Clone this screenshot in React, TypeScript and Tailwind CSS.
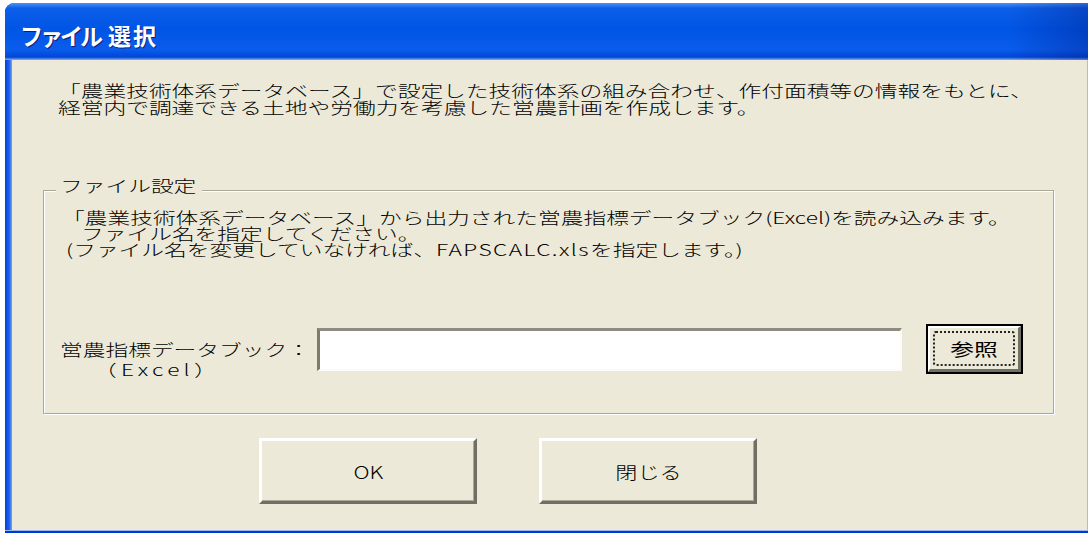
import type { ReactNode } from "react";

// one line of dialog text, stretched sideways like the old UI font
function Line({ children, className = "" }: { children: ReactNode; className?: string }) {
  return (
    <div className={`h-[17px] leading-[17px] whitespace-nowrap ${className}`}>
      <span className="inline-block origin-left scale-x-[1.42]">{children}</span>
    </div>
  );
}

function PushButton({ label, className = "" }: { label: string; className?: string }) {
  return (
    <button
      className={`flex items-center justify-center bg-[#ECE9D8] border-t-[3px] border-l-[3px] border-b-[3px] border-r-[3px] border-t-white border-l-white border-b-[#716f64] border-r-[#716f64] shadow-[inset_-1px_-1px_0_#aca899] ${className}`}
    >
      <span className="inline-block text-[17px] leading-[17px] font-light scale-x-[1.3]">{label}</span>
    </button>
  );
}

export default function App() {
  return (
    <div className="w-[1088px] h-[533px] overflow-hidden bg-white text-black font-light font-['Noto_Sans_CJK_JP','Noto_Sans',sans-serif]">
      <div className="ml-[5px] mt-[3px] w-[1090px] h-[530px] flex flex-col rounded-t-[9px] overflow-hidden bg-[#0842d6]">
        {/* title bar */}
        <div className="h-[57px] shrink-0 pl-[15px] pt-[21px] bg-[linear-gradient(to_right,transparent_92%,rgba(0,20,120,0.35)_100%),linear-gradient(to_bottom,#4a92f6_0%,#0d5fe9_9%,#0055e5_45%,#0a5cec_82%,#0046d6_95%,#8fb0ec_100%)]">
          <div className="flex h-[23px] leading-[23px] text-[23px] font-bold text-white whitespace-nowrap [text-shadow:1px_1px_0_#0a1f7a]">
            <span className="tracking-[-3px]">ファイル</span>
            <span className="ml-[8px] tracking-[2px]">選択</span>
          </div>
        </div>

        <div className="flex h-[470px] shrink-0">
          <div className="w-[7px] bg-[linear-gradient(to_right,#0a3ed8,#1664f0_60%,#7aa2ee)]" />

          {/* client area */}
          <div className="w-[1075px] bg-[#ECE9D8] flex flex-col">
            <div className="ml-[46px] mt-[22px]">
              <Line>「農業技術体系データベース」で設定した技術体系の組み合わせ、作付面積等の情報をもとに、</Line>
              <Line>経営内で調達できる土地や労働力を考慮した営農計画を作成します。</Line>
            </div>

            {/* file settings group */}
            <div className="relative ml-[31px] mt-[74px] w-[1011px] h-[224px] border border-[#aca899] shadow-[1px_1px_0_#fff,inset_1px_1px_0_#fff]">
              <div className="absolute left-[12px] top-[-14px] w-[146px] px-[4px] bg-[#ECE9D8]">
                <Line>ファイル設定</Line>
              </div>

              <div className="pt-[18px]">
                <div className="h-[16px] leading-[16px] whitespace-nowrap ml-[18px]">
                  <span className="inline-block origin-left scale-x-[1.42]">
                    「農業技術体系データベース」から出力された営農指標データブック(Excel)を読み込みます。
                  </span>
                </div>
                <div className="h-[16px] leading-[16px] whitespace-nowrap ml-[37px]">
                  <span className="inline-block origin-left scale-x-[1.42]">ファイル名を指定してください。</span>
                </div>
                <div className="h-[16px] leading-[16px] whitespace-nowrap ml-[22px]">
                  <span className="inline-block origin-left scale-x-[1.42]">
                    (ファイル名を変更していなければ、<span className="tracking-[1px]">FAPSCALC.xls</span>を指定します。)
                  </span>
                </div>
              </div>

              <div className="flex items-start ml-[16px] mt-[67px]">
                <div className="w-[257px] pt-[17px]">
                  <Line>営農指標データブック：</Line>
                  <Line className="ml-[34px] mt-[3px]">
                    <span className="tracking-[3px]">（Excel）</span>
                  </Line>
                </div>
                <div className="mt-[4px] w-[585px] h-[43px] bg-white border-t-[3px] border-l-[3px] border-b-2 border-r-2 border-t-[#8e8b7f] border-l-[#7d7a6e] border-b-[#fbfbf7] border-r-[#fbfbf7]" />
                <button className="ml-[24px] w-[97px] h-[50px] border-2 border-black bg-[#ECE9D8]">
                  <div className="h-full w-full border-t-2 border-l-2 border-b-[3px] border-r-[3px] border-t-white border-l-white border-b-[#716f64] border-r-[#716f64] p-[3px]">
                    <div className="h-full w-full rounded-[3px] border-2 border-dotted border-[#222] flex items-center justify-center">
                      <span className="inline-block text-[17px] leading-[17px] font-normal scale-x-[1.4]">参照</span>
                    </div>
                  </div>
                </button>
              </div>
            </div>

            <div className="flex ml-[247px] mt-[24px] gap-[62px]">
              <PushButton label="OK" className="w-[218px] h-[66px]" />
              <PushButton label="閉じる" className="w-[218px] h-[66px]" />
            </div>
          </div>

          <div className="w-[4px] bg-[linear-gradient(to_right,#a4bcf0_25%,#0a44d8_25%)]" />
        </div>

        {/* bottom frame edge */}
        <div className="h-[3px] shrink-0 bg-[linear-gradient(to_bottom,#9cb6ee_33%,#0036d8_33%)]" />
      </div>
    </div>
  );
}
